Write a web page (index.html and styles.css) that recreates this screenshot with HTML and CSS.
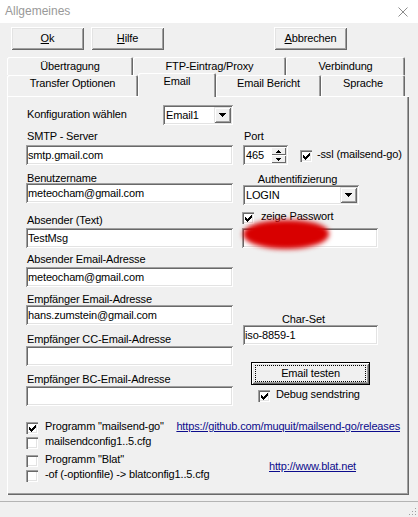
FILE: index.html
```html
<!DOCTYPE html>
<html lang="de">
<head>
<meta charset="utf-8">
<title>Allgemeines</title>
<link rel="stylesheet" href="styles.css">
</head>
<body>
<div class="titlebar">
  <span class="title">Allgemeines</span>
  <svg class="close" width="10" height="10" viewBox="0 0 10 10"><path d="M0.5 0.5 L9.5 9.5 M9.5 0.5 L0.5 9.5" stroke="#8c8c8c" stroke-width="1" fill="none"/></svg>
</div>

<div class="toolbar">
  <button class="btn"><u>O</u>k</button>
  <button class="btn"><u>H</u>ilfe</button>
  <button class="btn btn-cancel"><u>A</u>bbrechen</button>
</div>

<div class="tabs">
  <div class="tab-row tab-row-back">
    <div class="tab tab-uebertragung">Übertragung</div>
    <div class="tab tab-ftp">FTP-Eintrag/Proxy</div>
    <div class="tab tab-verbindung">Verbindung</div>
  </div>
  <div class="tab-row tab-row-front">
    <div class="tab tab-transfer">Transfer Optionen</div>
    <div class="tab tab-email active">Email</div>
    <div class="tab tab-bericht">Email Bericht</div>
    <div class="tab tab-sprache">Sprache</div>
  </div>
</div>

<div class="panel">
  <div class="columns">
    <div class="col col-left">
      <div class="konfig-row">
        <span class="konfig-label">Konfiguration wählen</span>
        <div class="combo combo-config">
          <span class="combo-text">Email1</span>
          <span class="drop-btn"><svg width="7" height="4" viewBox="0 0 7 4"><path d="M0 0h7v1h-1v1h-1v1h-1v1h-1v-1h-1v-1h-1v-1h-1z" fill="#000"/></svg></span>
        </div>
      </div>

      <label class="lbl lbl-smtp">SMTP - Server</label>
      <input class="edit edit-smtp" type="text" value="smtp.gmail.com">

      <label class="lbl lbl-user">Benutzername</label>
      <input class="edit edit-user" type="text" value="meteocham@gmail.com">

      <label class="lbl lbl-sender">Absender (Text)</label>
      <input class="edit edit-sender" type="text" value="TestMsg">

      <label class="lbl lbl-sendmail">Absender Email-Adresse</label>
      <input class="edit edit-sendmail" type="text" value="meteocham@gmail.com">

      <label class="lbl lbl-rcpt">Empfänger Email-Adresse</label>
      <input class="edit edit-rcpt" type="text" value="hans.zumstein@gmail.com">

      <label class="lbl lbl-cc">Empfänger CC-Email-Adresse</label>
      <input class="edit edit-cc" type="text" value="">

      <label class="lbl lbl-bc">Empfänger BC-Email-Adresse</label>
      <input class="edit edit-bc" type="text" value="">
    </div>

    <div class="col col-right">
      <label class="lbl lbl-port">Port</label>
      <div class="port-row">
        <div class="spin">
          <span class="spin-text">465</span>
          <span class="spin-btns">
            <span class="spin-btn"><svg width="5" height="3" viewBox="0 0 5 3"><path d="M2 0h1v1h1v1h1v1h-5v-1h1v-1h1z" fill="#000"/></svg></span>
            <span class="spin-btn"><svg width="5" height="3" viewBox="0 0 5 3"><path d="M0 0h5v1h-1v1h-1v1h-1v-1h-1v-1h-1z" fill="#000"/></svg></span>
          </span>
        </div>
        <div class="check-row check-ssl">
          <span class="cb"><svg width="7" height="7" viewBox="0 0 7 7"><path d="M6 0h1v1h-1zM5 1h2v1h-2zM0 2h1v1h-1zM4 2h3v1h-3zM0 3h2v1h-2zM3 3h3v1h-3zM0 4h5v1h-5zM1 5h3v1h-3zM2 6h1v1h-1z" fill="#000"/></svg></span>
          <span class="cb-text">-ssl (mailsend-go)</span>
        </div>
      </div>

      <label class="lbl lbl-auth">Authentifizierung</label>
      <div class="combo combo-auth">
        <span class="combo-text">LOGIN</span>
        <span class="drop-btn"><svg width="7" height="4" viewBox="0 0 7 4"><path d="M0 0h7v1h-1v1h-1v1h-1v1h-1v-1h-1v-1h-1v-1h-1z" fill="#000"/></svg></span>
      </div>

      <div class="check-row check-pw">
        <span class="cb"><svg width="7" height="7" viewBox="0 0 7 7"><path d="M6 0h1v1h-1zM5 1h2v1h-2zM0 2h1v1h-1zM4 2h3v1h-3zM0 3h2v1h-2zM3 3h3v1h-3zM0 4h5v1h-5zM1 5h3v1h-3zM2 6h1v1h-1z" fill="#000"/></svg></span>
        <span class="cb-text">zeige Passwort</span>
      </div>
      <div class="pw-wrap">
        <input class="edit edit-pw" type="text" value="">
        <span class="redact"></span>
      </div>

      <label class="lbl lbl-charset">Char-Set</label>
      <input class="edit edit-charset" type="text" value="iso-8859-1">

      <button class="btn-default"><span class="focus-rect">Email testen</span></button>

      <div class="check-row check-debug">
        <span class="cb"><svg width="7" height="7" viewBox="0 0 7 7"><path d="M6 0h1v1h-1zM5 1h2v1h-2zM0 2h1v1h-1zM4 2h3v1h-3zM0 3h2v1h-2zM3 3h3v1h-3zM0 4h5v1h-5zM1 5h3v1h-3zM2 6h1v1h-1z" fill="#000"/></svg></span>
        <span class="cb-text">Debug sendstring</span>
      </div>
    </div>
  </div>

  <div class="bottom">
    <div class="check-row row-mailsend">
      <span class="cb"><svg width="7" height="7" viewBox="0 0 7 7"><path d="M6 0h1v1h-1zM5 1h2v1h-2zM0 2h1v1h-1zM4 2h3v1h-3zM0 3h2v1h-2zM3 3h3v1h-3zM0 4h5v1h-5zM1 5h3v1h-3zM2 6h1v1h-1z" fill="#000"/></svg></span>
      <span class="cb-text">Programm "mailsend-go"</span>
      <a class="link link-gh" href="#">https://github.com/muquit/mailsend-go/releases</a>
    </div>
    <div class="check-row row-mailsend-cfg">
      <span class="cb"></span>
      <span class="cb-text">mailsendconfig1..5.cfg</span>
    </div>
    <div class="row-blat">
      <div class="check-row">
        <span class="cb"></span>
        <span class="cb-text">Programm "Blat"</span>
      </div>
      <a class="link link-blat" href="#">http://www.blat.net</a>
    </div>
    <div class="check-row row-blat-cfg">
      <span class="cb"></span>
      <span class="cb-text">-of (-optionfile) -&gt; blatconfig1..5.cfg</span>
    </div>
  </div>
</div>

<div class="statusbar">
  <svg class="grip" width="12" height="12" viewBox="0 0 12 12"><path d="M10 4h1v1h-1zM7 7h1v1h-1zM10 7h1v1h-1zM4 10h1v1h-1zM7 10h1v1h-1zM10 10h1v1h-1z" fill="#a0a0a0"/></svg>
</div>
</body>
</html>
```

FILE: styles.css
```css
* { box-sizing: border-box; }

html, body { margin: 0; padding: 0; }

body {
  width: 418px;
  height: 517px;
  overflow: hidden;
  background: #f0f0f0;
  font-family: "Liberation Sans", Arial, sans-serif;
  font-size: 11px;
  line-height: 13px;
  letter-spacing: -0.15px;
  color: #000;
}

/* ---------- title bar ---------- */
.titlebar {
  height: 23px;
  background: #fff;
  display: flex;
  align-items: center;
  justify-content: space-between;
  padding: 0 10px 0 5px;
}
.title {
  font-size: 12px;
  letter-spacing: 0;
  color: #999;
  margin-top: -1px;
}
.close { display: block; }

/* ---------- top buttons ---------- */
.toolbar {
  display: flex;
  gap: 7px;
  padding: 4px 0 0 11px;
}
.btn {
  width: 73px;
  height: 23px;
  padding: 0;
  border: 0;
  background: #f0f0f0;
  font: inherit;
  letter-spacing: inherit;
  line-height: 13px;
  color: #000;
  box-shadow: inset 1px 1px #fff, inset -1px -1px #696969,
              inset 2px 2px #e3e3e3, inset -2px -2px #a0a0a0;
}
.btn-cancel { margin-left: 103px; }

/* ---------- tabs ---------- */
.tabs { margin: 7px 0 0 7px; }
.tab-row { display: flex; }
.tab-row-back { height: 18px; }
.tab-row-front { height: 21px; }
.tab {
  flex: none;
  text-align: center;
  white-space: nowrap;
  background: #f0f0f0;
  border-radius: 2px 2px 0 0;
  box-shadow: inset 1px 1px #fff, inset -1px 0 #696969, inset -2px 0 #a0a0a0;
}
.tab-row-back .tab { padding-top: 3px; }
.tab-row-front .tab { padding-top: 2px; }
.tab.active {
  position: relative;
  z-index: 1;
  height: 24px;
  margin-top: -2px;
  padding-top: 2px;
}
.tab-uebertragung { width: 126px; }
.tab-ftp { width: 153px; }
.tab-verbindung { width: 119px; }
.tab-transfer { width: 131px; }
.tab-email { width: 78px; }
.tab-bericht { width: 105px; }
.tab-sprache { width: 84px; }

/* ---------- panel ---------- */
.panel {
  margin-left: 7px;
  width: 402px;
  height: 399px;
  padding: 9px 8px 0 19px;
  box-shadow: inset 1px 1px #fff, inset -1px -1px #696969, inset -2px -2px #a0a0a0;
}
.columns {
  display: grid;
  grid-template-columns: 207px 135px;
  column-gap: 10px;
  align-items: start;
}
.col {
  display: flex;
  flex-direction: column;
  align-items: flex-start;
}

.lbl {
  display: block;
  height: 13px;
  padding-left: 1px;
  white-space: nowrap;
}

.edit {
  display: block;
  height: 20px;
  margin: 0;
  padding: 0 2px;
  border: 0;
  outline: none;
  background: #fff;
  font: inherit;
  letter-spacing: inherit;
  line-height: 16px;
  color: #000;
  box-shadow: inset 1px 1px #a0a0a0, inset -1px -1px #fff,
              inset 2px 2px #696969, inset -2px -2px #e3e3e3;
}
.col-left .edit { width: 207px; }

/* left column vertical rhythm */
.konfig-row {
  width: 207px;
  height: 20px;
  display: flex;
  justify-content: space-between;
  align-items: flex-start;
}
.konfig-label { margin: 3px 0 0 1px; }
.lbl-smtp { margin-top: 5px; }
.edit-smtp { margin-top: 2px; }
.lbl-user { margin-top: 7px; }
.edit-user { margin-top: -2px; }
.lbl-sender { margin-top: 11px; }
.edit-sender { margin-top: 1px; }
.lbl-sendmail { margin-top: 5px; }
.edit-sendmail { margin-top: 1px; }
.lbl-rcpt { margin-top: 6px; }
.edit-rcpt { margin-top: -1px; }
.lbl-cc { margin-top: 8px; }
.edit-cc { margin-top: 0; }
.lbl-bc { margin-top: 7px; }
.edit-bc { margin-top: 0; }

/* combo boxes */
.combo {
  display: flex;
  height: 20px;
  padding: 2px;
  background: #fff;
  box-shadow: inset 1px 1px #a0a0a0, inset -1px -1px #fff,
              inset 2px 2px #696969, inset -2px -2px #e3e3e3;
}
.combo-text {
  flex: 1;
  padding-left: 1px;
  line-height: 16px;
}
.drop-btn {
  width: 17px;
  height: 16px;
  display: flex;
  align-items: center;
  justify-content: center;
  background: #f0f0f0;
  box-shadow: inset 1px 1px #e3e3e3, inset -1px -1px #696969,
              inset 2px 2px #fff, inset -2px -2px #a0a0a0;
}
.combo-config { width: 70px; }
.combo-auth { width: 116px; margin-top: -1px; }

/* right column */
.lbl-port { margin-top: 25px; }
.port-row {
  display: flex;
  align-items: flex-start;
  margin-top: 2px;
}
.spin {
  display: flex;
  width: 45px;
  height: 20px;
  padding: 2px;
  background: #fff;
  box-shadow: inset 1px 1px #a0a0a0, inset -1px -1px #fff,
              inset 2px 2px #696969, inset -2px -2px #e3e3e3;
}
.spin-text {
  flex: 1;
  padding-left: 1px;
  line-height: 16px;
}
.spin-btns {
  display: flex;
  flex-direction: column;
  width: 15px;
}
.spin-btn {
  flex: 1;
  display: flex;
  align-items: center;
  justify-content: center;
  background: #f0f0f0;
  box-shadow: inset 1px 1px #fff, inset -1px -1px #696969;
}

.check-row {
  display: flex;
  align-items: flex-start;
  gap: 6px;
  height: 15px;
  white-space: nowrap;
}
.cb {
  flex: none;
  width: 12px;
  height: 12px;
  margin-top: 2px;
  display: flex;
  align-items: center;
  justify-content: center;
  background: #fff;
  box-shadow: inset 1px 1px #a0a0a0, inset 2px 2px #696969,
              inset -1px -1px #fff, inset -2px -2px #e3e3e3;
}
.cb svg { display: block; margin: 1px 0 0 1px; }

.check-ssl { margin: 3px 0 0 12px; gap: 5px; }

.lbl-auth {
  width: 108px;
  text-align: center;
  margin-top: 8px;
}

.check-pw { margin: 5px 0 0 -1px; gap: 7px; }

.pw-wrap {
  position: relative;
  margin: 3px 0 0 -1px;
}
.edit-pw { width: 136px; }
.redact {
  position: absolute;
  left: 1px;
  top: -8px;
  width: 86px;
  height: 29px;
  border-radius: 48% 45% 50% 50%;
  background: #d80000;
  filter: blur(2.5px);
}

.lbl-charset {
  width: 120px;
  text-align: center;
  margin-top: 65px;
}
.edit-charset {
  width: 135px;
  margin-top: -1px;
}

.btn-default {
  width: 119px;
  height: 23px;
  margin: 17px 0 0 8px;
  padding: 2px 3px;
  border: 1px solid #000;
  background: #f0f0f0;
  font: inherit;
  letter-spacing: inherit;
  color: #000;
  box-shadow: inset 1px 1px #fff, inset -1px -1px #696969,
              inset 2px 2px #e3e3e3, inset -2px -2px #a0a0a0;
}
.focus-rect {
  display: block;
  height: 17px;
  line-height: 15px;
  border: 1px dotted #000;
  text-align: center;
}

.check-debug { margin: 3px 0 0 15px; }

/* bottom rows */
.bottom { margin-top: 14px; }
.bottom .check-row { gap: 7px; }
.row-mailsend-cfg { margin-top: 0; }
.row-blat {
  display: grid;
  grid-template-columns: 219px 135px;
  grid-template-rows: 15px;
  margin-top: 3px;
}
.row-blat-cfg { margin-top: 0; }

.link {
  color: #0c0c8c;
  text-decoration: underline;
  white-space: nowrap;
}
.link-gh { margin-left: auto; margin-right: 1px; }
.link-blat {
  justify-self: center;
  margin-top: 7px;
}

/* status bar */
.statusbar {
  margin-top: 6px;
  height: 16px;
  border-top: 1px solid #b4b4b4;
  display: flex;
  justify-content: flex-end;
  align-items: flex-end;
}
.grip { display: block; margin: 0 1px 1px 0; }
```
